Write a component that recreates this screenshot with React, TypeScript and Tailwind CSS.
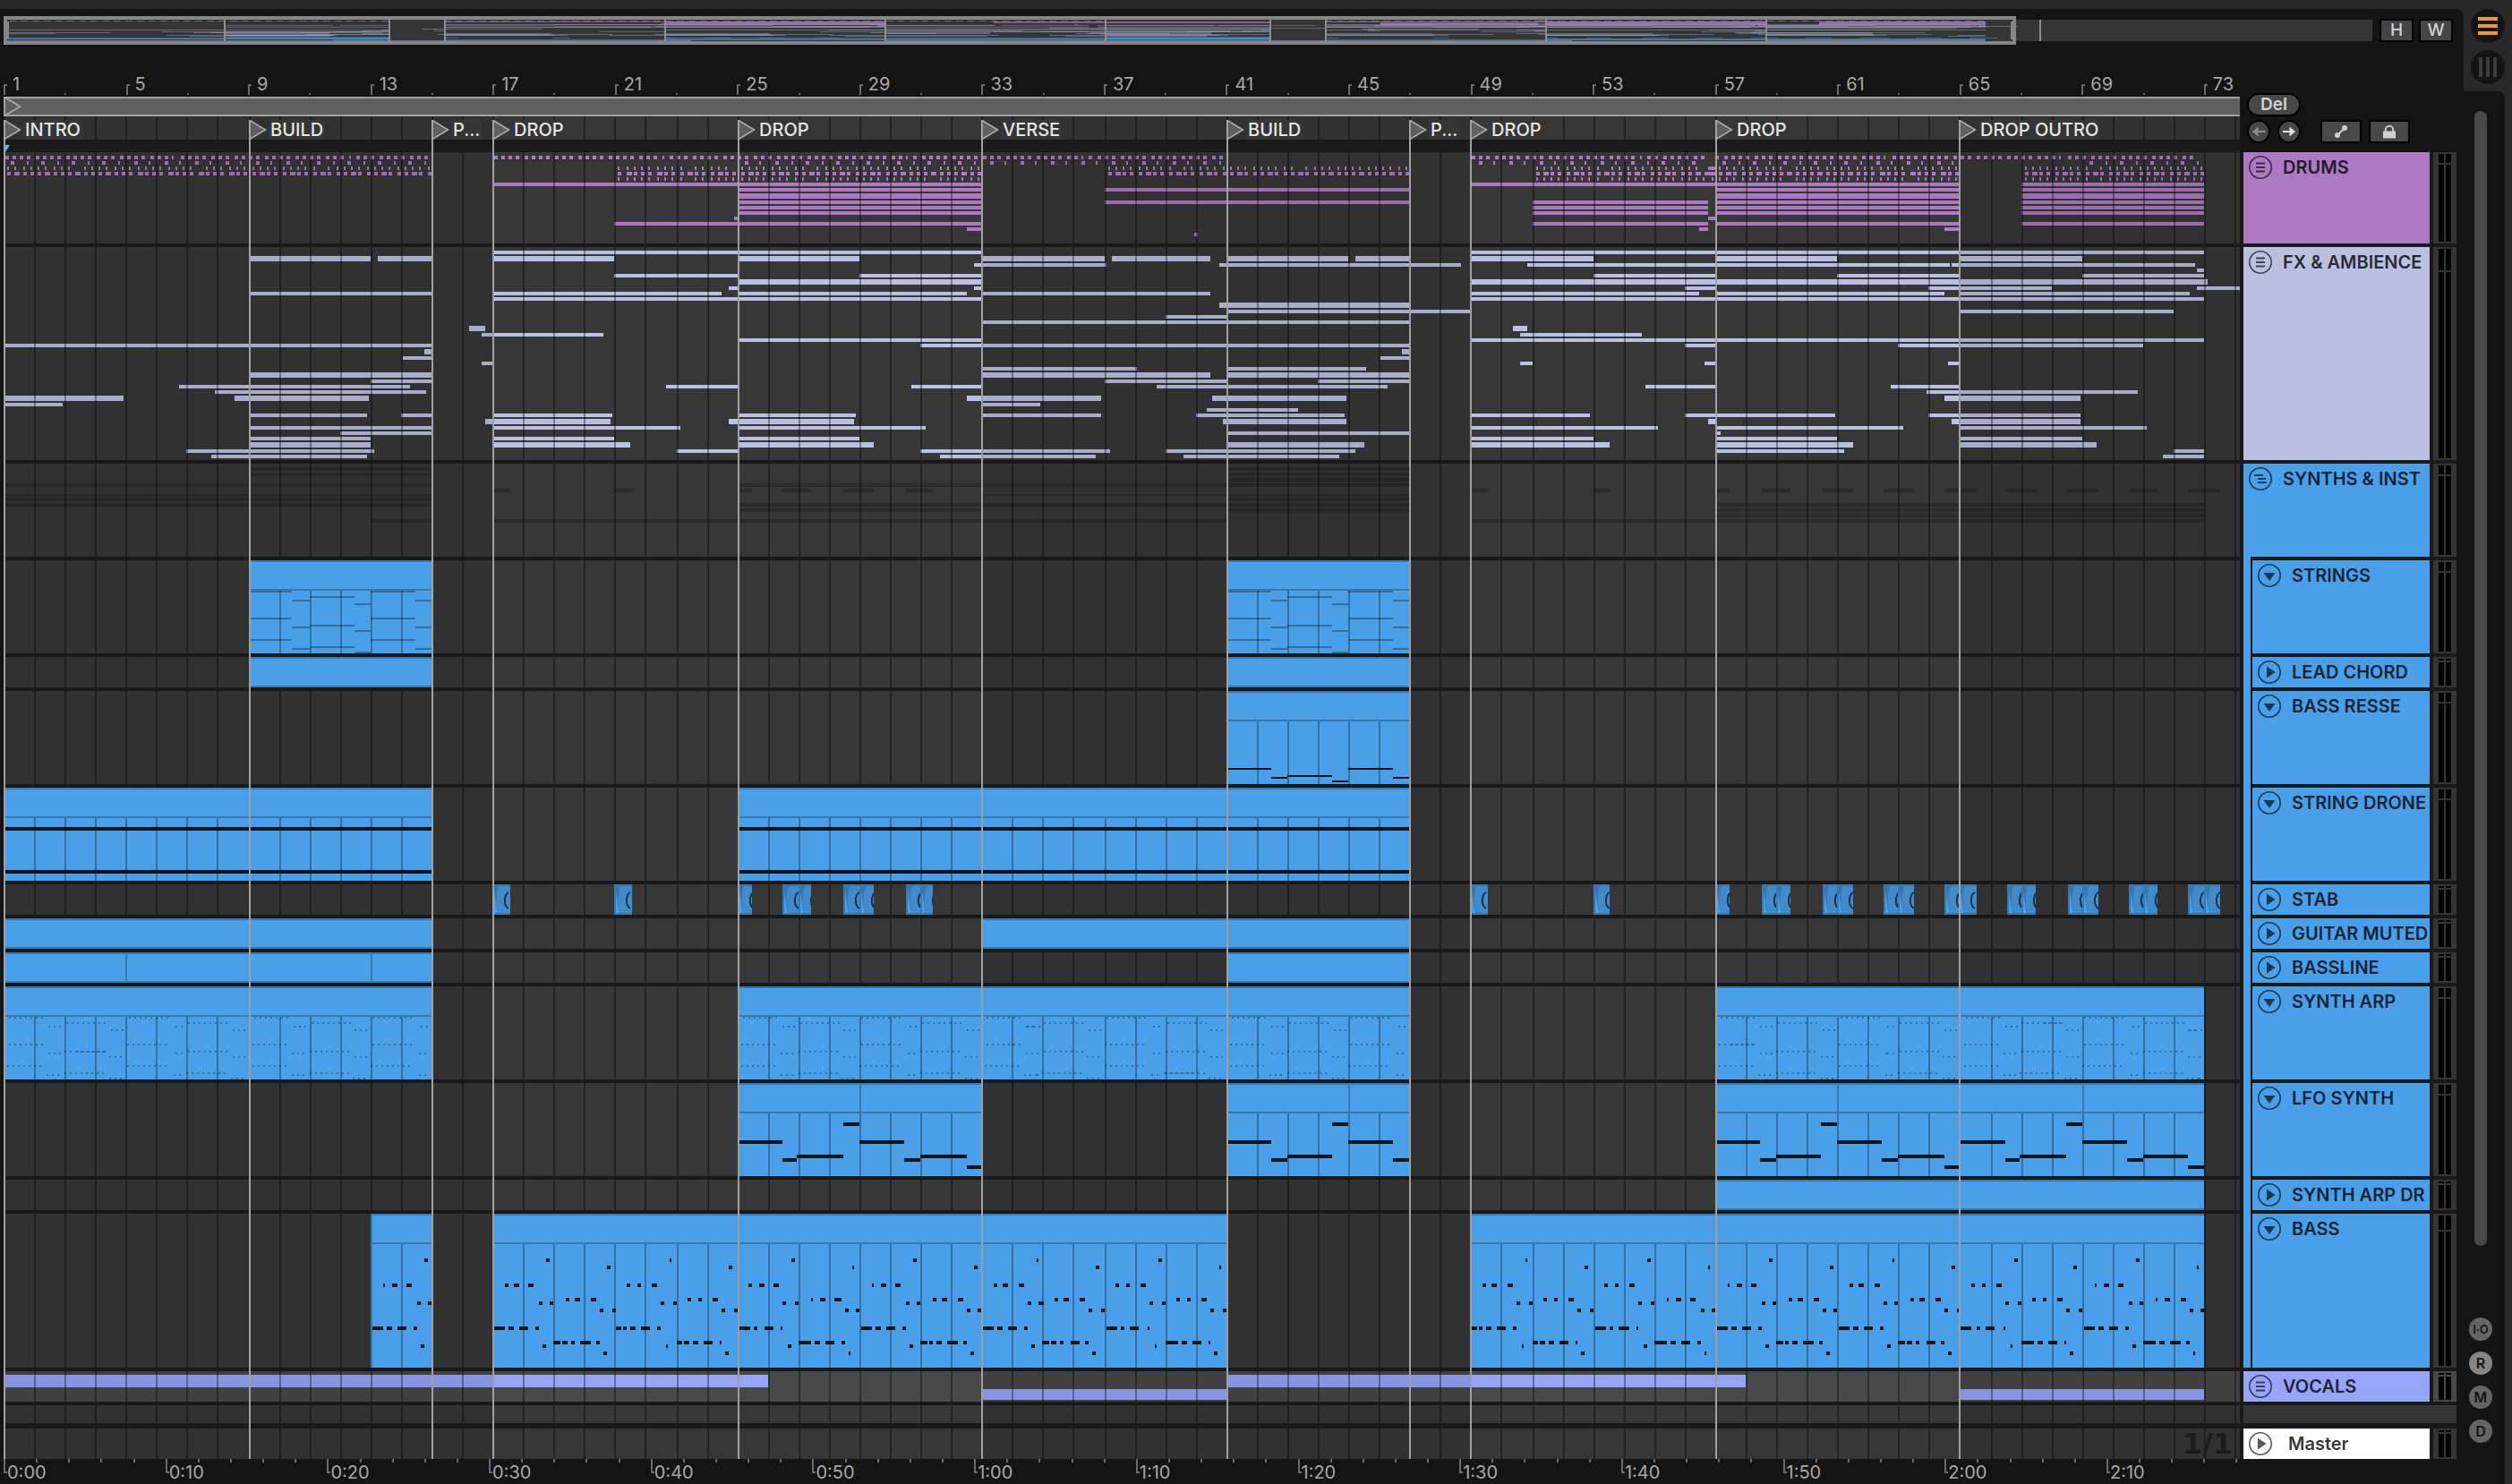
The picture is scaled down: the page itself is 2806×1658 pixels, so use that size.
import React from "react";

type Row = [y: number, h: number, spans: number[]];

interface Track {
  name: string;
  h: number;
  spans: number[];
  mini: [y: number, h: number];
  open?: boolean;
  dividers?: number[];
  notes?: Note[];
  notePeriod?: number;
  noteClass?: string;
}

type Note = [y: number, h: number, start: number, length: number];

const BAR = 34.14;
const WIDTH = 2498;
const BARS = WIDTH / BAR;

// Everything on the timeline snaps to a 2px raster.
// Bar lines are 2px wide, so off-grid events are measured from their centre.
const snap = (v: number) => 2 * Math.round(v / 2);
const barX = (bar: number) =>
  snap((bar - 1) * BAR + (Number.isInteger(bar) ? 0 : 1));
const pct = (bars: number) => `${(bars / BARS) * 100}%`;

const HEIGHTS: Record<number, string> = {
  20: "h-5",
  26: "h-[26px]",
  34: "h-[34px]",
  102: "h-[102px]",
  104: "h-[104px]",
  172: "h-[172px]",
  238: "h-[238px]",
};

const LOCATORS = [
  { bar: 1, label: "INTRO" },
  { bar: 9, label: "BUILD" },
  { bar: 15, label: "P..." },
  { bar: 17, label: "DROP" },
  { bar: 25, label: "DROP" },
  { bar: 33, label: "VERSE" },
  { bar: 41, label: "BUILD" },
  { bar: 47, label: "P..." },
  { bar: 49, label: "DROP" },
  { bar: 57, label: "DROP" },
  { bar: 65, label: "DROP OUTRO" },
];

const DRUM_ROWS: Row[] = [
  [34, 4, [17, 33, 49, 65, 67, 73]],
  [40, 4, [25, 33, 37, 47, 57, 65, 67, 73]],
  [46, 6, [25, 33, 57, 65, 67, 73]],
  [54, 4, [25, 33, 37, 47, 51, 56.75, 57, 65, 67, 73]],
  [60, 4, [25, 33, 51, 56.75, 57, 65, 67, 73]],
  [66, 4, [25, 33, 51, 56.75, 57, 65, 67, 73]],
  [72, 4, [24.87, 25, 56.75, 57]],
  [78, 4, [21, 33, 51, 56.75, 57, 65, 67, 73]],
  [84, 4, [32.5, 33, 56.45, 56.75, 64.5, 65]],
  [90, 4, [39.93, 40.05]],
  [16, 4, [56.75, 57]],
  [22, 4, [56.65, 57]],
];

const HIT_ROWS: {
  y: number;
  kind: "kick" | "snare" | "hat" | "perc";
  spans: number[];
}[] = [
  { y: 4, kind: "kick", spans: [1, 15, 17, 24.9, 25, 40.9, 49, 56.6, 57, 72.6] },
  { y: 10, kind: "snare", spans: [1, 15, 25, 40.9, 49, 56.4, 57, 65, 69, 73] },
  { y: 16, kind: "hat", spans: [1, 15, 21, 24.7, 25, 33, 37, 47, 51, 56.5, 57, 65, 67, 73] },
  { y: 22, kind: "perc", spans: [1, 15, 21, 33, 37, 47, 51, 56.5, 57, 65, 67, 73] },
  { y: 28, kind: "hat", spans: [21, 33, 51, 57, 57, 65, 67, 73] },
];

const FX_ROWS: Row[] = [
  [4, 4, [17, 33, 49, 73]],
  [10, 6, [9, 12.97, 13.2, 15, 17, 20.97, 25, 28.97, 33, 36.97, 37.23, 40.45, 41, 44.96, 45.2, 47, 49, 53, 57, 61, 65, 69]],
  [18, 4, [32.73, 37.05, 40.73, 48.68, 50.85, 64.65, 64.73, 72.7]],
  [24, 4, [72.75, 73]],
  [30, 4, [21, 25, 29, 33, 53, 57, 61, 65, 69, 73]],
  [36, 6, [25, 33, 49, 73.1]],
  [44, 4, [24.7, 25, 32.73, 33, 56, 57, 64, 68, 72.75, 74.2]],
  [50, 4, [9, 15, 17, 24.47, 25, 32.5, 33, 40.45, 49, 56.45, 57, 64.5, 65, 72.5]],
  [56, 4, [17, 33, 49, 73]],
  [62, 6, [40.73, 47]],
  [70, 4, [41, 49, 65, 72]],
  [76, 4, [39, 41]],
  [82, 4, [33, 47]],
  [88, 6, [16.2, 16.72, 50.38, 50.85]],
  [96, 4, [16.6, 20.6, 50.6, 54.6]],
  [102, 4, [25, 33, 49, 73]],
  [108, 4, [1, 15, 31, 47, 56, 57, 63, 71]],
  [114, 6, [14.74, 15, 46.73, 47]],
  [122, 4, [14.03, 15, 46.03, 47]],
  [128, 4, [16.6, 17, 50.6, 51, 56.65, 57, 64.6, 65]],
  [134, 4, [33, 38.05, 41, 45.55]],
  [140, 6, [9, 15, 33, 40.45, 41, 47]],
  [148, 4, [13, 15, 37, 41, 44, 47]],
  [154, 4, [6.7, 14.27, 22.65, 25, 30.67, 33, 38.7, 46.26, 54.7, 57, 62.7, 65]],
  [160, 4, [7.9, 14.8, 63.9, 70.8]],
  [166, 6, [1, 4.9, 8.53, 12.92, 32.5, 36.87, 40.5, 44.9, 64.5, 68.95]],
  [174, 4, [1, 2.9, 33, 34.9]],
  [180, 4, [40.35, 43.33]],
  [186, 4, [9, 12.86, 14, 15, 17, 20.88, 25, 28.86, 33, 36.87, 40, 44.85, 49, 52.9, 56, 60.9, 64, 68.9]],
  [192, 6, [16.73, 20.83, 24.7, 28.8, 40.87, 44.9, 56.75, 57, 64.73, 68.95]],
  [200, 4, [9, 15, 17, 23.1, 25, 31.15, 49, 55.1, 57, 63.15, 65, 71.1]],
  [206, 4, [12, 15, 41, 47, 57, 57.17]],
  [212, 4, [9, 13, 17, 21, 25, 29, 49, 53, 57, 61, 65, 69]],
  [218, 6, [9, 13, 17, 21.47, 25, 29.45, 41, 45.5, 49, 53.5, 57, 61.5, 65, 69.45]],
  [226, 4, [6.95, 13.1, 23, 25, 31, 37.18, 39, 45.2, 57, 61.2, 72, 73]],
  [232, 4, [7.77, 12.86, 31.6, 36.7, 39.6, 44.7, 71.65, 73]],
];

const VOCAL_ROWS: Row[] = [
  [4, 14, [1, 26, 41, 58]],
  [20, 12, [33, 41, 65, 73]],
];

const chordNotes = (levels: number[][], h: number): Note[] => {
  const parts = [
    [0, 1.43],
    [1.43, 0.55],
    [1.98, 1.48],
    [3.46, 0.5],
  ];
  return parts.flatMap(([start, length], i) =>
    levels[i].map((y): Note => [y, h, start, length])
  );
};

const arpNotes = (): Note[] => {
  const parts: [number, number, number[]][] = [
    [0.15, 7, [34, 64, 88]],
    [1.45, 3, [44, 74, 98]],
    [2.02, 8, [40, 72, 96]],
    [3.47, 3, [48, 78, 102]],
    [4.05, 8, [34, 64, 88]],
    [5.6, 2, [44, 74, 98]],
    [6.02, 8, [40, 72, 96]],
    [7.47, 3, [48, 78, 102]],
  ];
  const notes: Note[] = [];
  parts.forEach(([start, count, levels]) => {
    levels.forEach((y, l) => {
      for (let i = 0; i < count; i++) {
        notes.push([y, 2, start + i * 0.176 - l * 0.03, 0.06]);
      }
    });
  });
  return notes;
};

const BASS_NOTES: Note[] = [
  [50, 4, 1.75, 0.1],
  [58, 4, 3.72, 0.1],
  [78, 4, 0.37, 0.1],
  [78, 4, 0.68, 0.16],
  [78, 4, 1.16, 0.18],
  [94, 4, 2.37, 0.1],
  [94, 4, 2.68, 0.16],
  [94, 4, 3.18, 0.18],
  [98, 4, 1.48, 0.12],
  [98, 4, 1.86, 0.12],
  [106, 4, 3.48, 0.12],
  [106, 4, 3.86, 0.12],
  [126, 4, 0.03, 0.18],
  [126, 4, 0.22, 0.16],
  [126, 4, 0.5, 0.16],
  [126, 4, 0.84, 0.3],
  [126, 4, 1.38, 0.1],
  [142, 4, 2, 0.2],
  [142, 4, 2.24, 0.16],
  [142, 4, 2.52, 0.16],
  [142, 4, 2.86, 0.32],
  [142, 4, 3.38, 0.1],
  [146, 4, 1.62, 0.1],
  [154, 4, 3.6, 0.1],
];

const LFO_NOTES: Note[] = [
  [64, 4, 0, 1.45],
  [84, 4, 1.45, 0.5],
  [80, 4, 1.95, 1.5],
  [44, 4, 3.45, 0.52],
  [64, 4, 4, 1.45],
  [84, 4, 5.45, 0.5],
  [80, 4, 5.95, 1.52],
  [92, 4, 7.47, 0.53],
];

const STAB_SPANS = [
  17, 17.55, 21, 21.55, 25, 25.43, 26.43, 26.98, 26.98, 27.4, 28.43, 29, 29, 29.43,
  30.47, 30.98, 30.98, 31.4, 49, 49.55, 53, 53.53, 57, 57.45, 58.5, 59, 59, 59.45,
  60.5, 61, 61, 61.5, 62.5, 63, 63, 63.45, 64.5, 65, 65, 65.5, 66.5, 67, 67, 67.45,
  68.5, 69, 69, 69.5, 70.5, 71, 71, 71.43, 72.45, 73, 73, 73.5,
];

const SYNTH_TRACKS: Track[] = [
  {
    name: "STRINGS",
    h: 104,
    spans: [9, 15, 41, 47],
    mini: [4, 4],
    open: true,
    notes: chordNotes([[34, 64, 88], [44, 74, 98], [40, 72, 96], [48, 78, 102]], 2),
    notePeriod: 4,
    noteClass: "fill-black/30",
  },
  { name: "LEAD CHORD", h: 34, spans: [9, 15, 41, 47], mini: [10, 4] },
  {
    name: "BASS RESSE",
    h: 104,
    spans: [41, 47],
    mini: [16, 4],
    open: true,
    notes: chordNotes([[86], [96], [94], [100]], 2),
    notePeriod: 4,
    noteClass: "fill-[#06141c]",
  },
  {
    name: "STRING DRONE",
    h: 104,
    spans: [1, 15, 25, 47],
    mini: [22, 4],
    open: true,
    notes: [
      [44, 4, 0, 2],
      [92, 4, 0, 2],
    ],
    notePeriod: 2,
    noteClass: "fill-[#06141c]",
  },
  { name: "STAB", h: 34, spans: STAB_SPANS, mini: [28, 4] },
  { name: "GUITAR MUTED", h: 34, spans: [1, 15, 33, 47], mini: [34, 2] },
  { name: "BASSLINE", h: 34, spans: [1, 15, 41, 47], mini: [38, 4], dividers: [5, 13] },
  {
    name: "SYNTH ARP",
    h: 104,
    spans: [1, 15, 25, 47, 57, 73],
    mini: [44, 4],
    open: true,
    notes: arpNotes(),
    notePeriod: 8,
    noteClass: "fill-black/30",
  },
  {
    name: "LFO SYNTH",
    h: 104,
    spans: [25, 33, 41, 47, 57, 73],
    mini: [50, 4],
    open: true,
    dividers: [29, 45, 61, 69],
    notes: LFO_NOTES,
    notePeriod: 8,
    noteClass: "fill-[#06141c]",
  },
  { name: "SYNTH ARP DR", h: 34, spans: [57, 73], mini: [56, 4] },
  {
    name: "BASS",
    h: 172,
    spans: [13, 15, 17, 41, 49, 73],
    mini: [62, 4],
    open: true,
    notes: BASS_NOTES,
    notePeriod: 4,
    noteClass: "fill-[#06141c]",
  },
];

const SYNTH_MINI: Row[] = SYNTH_TRACKS.map((t) => [t.mini[0], t.mini[1], t.spans]);

const pairs = (spans: number[]) => {
  const out: [number, number][] = [];
  for (let i = 0; i < spans.length; i += 2) out.push([spans[i], spans[i + 1]]);
  return out;
};

const Spans: React.FC<{ rows: Row[]; className: string }> = ({ rows, className }) => (
  <g className={className}>
    {rows.map(([y, h, spans]) =>
      pairs(spans).map(([a, b], i) => (
        <rect key={`${y}-${i}`} x={barX(a)} y={y} width={barX(b) - barX(a)} height={h} />
      ))
    )}
  </g>
);

// Alternating 16-bar shading
const Zones: React.FC<{ h: number }> = ({ h }) => (
  <g className="fill-black/10">
    {[[1, 17], [33, 49], [65, 75]].map(([a, b]) => (
      <rect key={a} x={barX(a)} y={0} width={barX(b) - barX(a)} height={h} />
    ))}
  </g>
);

const Grid: React.FC<{ h: number }> = ({ h }) => (
  <g className="fill-black/35">
    {Array.from({ length: 74 }, (_, i) => (
      <rect key={i} x={barX(i + 1)} y={0} width={2} height={h} />
    ))}
  </g>
);

interface LaneProps {
  h: number;
  tone?: string;
  over?: React.ReactNode;
  children?: React.ReactNode;
}

const Lane: React.FC<LaneProps> = ({ h, tone = "bg-[#373737]", over, children }) => (
  <div className={`w-full ${tone} ${HEIGHTS[h]}`}>
    <svg
      className="block w-full h-full"
      viewBox={`0 0 ${WIDTH} ${h}`}
      preserveAspectRatio="none"
      shapeRendering="crispEdges"
      aria-hidden="true"
    >
      {children}
      <Zones h={h} />
      <Grid h={h} />
      {over}
    </svg>
  </div>
);

const DrumHits: React.FC = () => {
  const rects: React.ReactNode[] = [];
  HIT_ROWS.forEach(({ y, kind, spans }) => {
    pairs(spans).forEach(([a, b]) => {
      for (let q = 0; q < (b - a) * 4; q++) {
        const pos = a + q / 4;
        let offset = 0;
        let width = 4;
        if (kind === "kick") {
          offset = 1;
          if (q % 23 === 22) width = 2;
        }
        if (kind === "snare") {
          if (q % 2 === 0) continue;
          width = q % 4 === 1 ? 4 : 2;
        }
        if (kind === "hat") {
          offset = 4;
          width = 2;
          if (q % 16 === 9) continue;
        }
        if (kind === "perc") {
          offset = 4;
          width = q % 4 === 1 ? 6 : 4;
        }
        const x = snap((pos - 1) * BAR + offset);
        if (x + width > barX(b) + 2) continue;
        rects.push(<rect key={`${y}-${x}`} x={x} y={y} width={width} height={4} />);
      }
    });
  });
  return <g className="fill-[#ad79c2]">{rects}</g>;
};

const StabClip: React.FC<{ a: number; b: number }> = ({ a, b }) => {
  const x = barX(a);
  const w = barX(b) - x;
  return (
    <svg x={x} y={0} width={w} height={34} viewBox={`0 0 ${w} 34`} shapeRendering="auto">
      <rect width={w} height={34} className="fill-[#3579b0]" />
      <rect x={2} y={2} width={w} height={30} className="fill-[#428bc8]" />
      <path d="M2 2H7C4 12 4 22 6 32H2Z" className="fill-[#3877ab]" />
      <path d="M2 8L5.500 32H2Z" className="fill-[#4aa0e8]" />
      <path d="M18 9C12.500 12 12.500 24 18 27" className="fill-none stroke-[#0d2a40]" strokeWidth={1.8} />
    </svg>
  );
};

const Clip: React.FC<{ track: Track; a: number; b: number }> = ({ track, a, b }) => {
  const { h, notes, notePeriod = 4, noteClass, dividers = [] } = track;
  const x = barX(a);
  const w = barX(b) - x;
  const placed: React.ReactNode[] = [];
  if (notes) {
    for (let base = a; base < b; base += notePeriod) {
      notes.forEach(([y, nh, start, length], i) => {
        const from = base + start;
        if (from >= b - 0.03) return;
        const left = barX(from);
        const right = Math.max(left + 2, barX(Math.min(from + length, b)));
        placed.push(
          <rect key={`${base}-${i}`} x={left} y={y} width={right - left} height={nh} />
        );
      });
    }
  }
  return (
    <g>
      <rect x={x} y={0} width={w} height={h} className="fill-[#4aa0e8]" />
      <rect x={x} y={0} width={w} height={2} className="fill-[#3579b0]" />
      <rect x={x} y={32} width={w} height={2} className="fill-[#3579b0]" />
      <rect x={x} y={0} width={2} height={h} className="fill-[#3579b0]" />
      {dividers
        .filter((d) => d > a && d < b)
        .map((d) => (
          <rect key={d} x={barX(d)} y={2} width={2} height={30} className="fill-[#3579b0]" />
        ))}
      {notes &&
        Array.from({ length: Math.ceil(b - a) - 1 }, (_, i) => (
          <rect
            key={i}
            x={barX(a + i + 1)}
            y={34}
            width={2}
            height={h - 34}
            className="fill-black/30"
          />
        ))}
      <g className={noteClass}>{placed}</g>
    </g>
  );
};

const TrackLane: React.FC<{ track: Track }> = ({ track }) => (
  <Lane
    h={track.h}
    over={pairs(track.spans).map(([a, b]) =>
      track.name === "STAB" ? (
        <StabClip key={a} a={a} b={b} />
      ) : (
        <Clip key={a} track={track} a={a} b={b} />
      )
    )}
  />
);

type IconKind = "group" | "nested" | "open" | "closed";

const FoldIcon: React.FC<{ kind: IconKind }> = ({ kind }) => (
  <svg className="w-[26px] h-[26px]" viewBox="0 0 26 26" fill="none" stroke="currentColor" strokeWidth={1.6}>
    <circle cx="13" cy="13" r="12.200" />
    {kind === "group" && <path d="M8 8.500h10M8 13h10M8 17.500h10" strokeWidth={2} />}
    {kind === "nested" && <path d="M6 9h10M10 13h9M10 17h10" strokeWidth={2} />}
    {kind === "open" && <path d="M6.500 10h13L13 19Z" fill="currentColor" stroke="none" />}
    {kind === "closed" && <path d="M10 6.500L19.500 13L10 19.500Z" fill="currentColor" stroke="none" />}
  </svg>
);

interface HeaderProps {
  name: string;
  h: number;
  kind: IconKind;
  tone: string;
  wide?: boolean;
}

const TrackHeader: React.FC<HeaderProps> = ({ name, h, kind, tone, wide }) => (
  <div className={`${tone} ${HEIGHTS[h]} overflow-hidden`}>
    <div className={`h-[34px] flex items-center pl-[6px] ${wide ? "gap-[18px]" : "gap-3"}`}>
      <button aria-label={`Fold ${name}`} className="text-black/65 shrink-0">
        <FoldIcon kind={kind} />
      </button>
      <span className="text-[20px] leading-6 font-semibold whitespace-nowrap text-black/80">
        {name}
      </span>
    </div>
  </div>
);

const Meter: React.FC<{ h: number; tone?: string }> = ({ h, tone = "bg-[#353535]" }) => {
  let peak = "h-[2px]";
  if (h > 50) peak = "h-[10px]";
  if (h > 150) peak = "h-4";
  if (h > 200) peak = "h-6";
  return (
    <div className={`${tone} ${HEIGHTS[h]} px-[6px] py-[2px] flex gap-[2px]`}>
      {[0, 1].map((i) => (
        <div key={i} className="flex-1 flex flex-col gap-[2px]">
          <div className={`bg-black ${peak}`} />
          <div className="bg-black flex-1" />
        </div>
      ))}
    </div>
  );
};

const OVER_BAR = 30.74;
const overX = (bar: number) => snap((bar - 1) * OVER_BAR);

const MiniSpans: React.FC<{ rows: Row[]; top: number; scale: number; className: string }> = ({
  rows,
  top,
  scale,
  className,
}) => (
  <g className={className}>
    {rows.map(([y, , spans]) =>
      pairs(spans).map(([a, b], i) => (
        <rect
          key={`${y}-${i}`}
          x={overX(a)}
          y={Math.round(top + y * scale)}
          width={Math.max(2, overX(b) - overX(a))}
          height={1}
        />
      ))
    )}
  </g>
);

const Overview: React.FC = () => (
  <svg
    className="block flex-1 min-w-0 h-8"
    viewBox="0 0 2646 32"
    preserveAspectRatio="none"
    shapeRendering="crispEdges"
    role="img"
    aria-label="Arrangement overview"
  >
    <rect x={0} y={4} width={2646} height={24} className="fill-[#353535]" />
    <MiniSpans rows={DRUM_ROWS} top={4} scale={0.06} className="fill-[#ad79c2]/60" />
    <path
      d={`M6 5H${overX(15)}M${overX(17)} 5H${overX(41)}M${overX(49)} 5H${overX(73)}`}
      className="stroke-[#ad79c2]/50"
      strokeWidth={1}
      strokeDasharray="8 5"
    />
    <MiniSpans rows={FX_ROWS} top={9} scale={0.055} className="fill-[#bac0e2]/35" />
    <MiniSpans rows={SYNTH_MINI} top={23} scale={0.05} className="fill-[#3f97de]/50" />
    <MiniSpans rows={VOCAL_ROWS} top={27} scale={0} className="fill-[#96a5fc]/50" />
    <g className="fill-[#8e8e8e]">
      {LOCATORS.slice(1).map(({ bar }) => (
        <rect key={bar} x={overX(bar)} y={4} width={2} height={24} />
      ))}
      <rect x={overX(75)} y={4} width={2} height={24} />
    </g>
    <rect x={2} y={2} width={2244} height={28} className="fill-none stroke-[#868686]" strokeWidth={4} />
    <rect x={0} y={6} width={6} height={20} className="fill-[#868686]" />
    <rect x={2242} y={6} width={4} height={20} className="fill-[#868686]" />
  </svg>
);

const BarRuler: React.FC = () => (
  <div className="flex h-[58px] pt-8 overflow-hidden">
    {Array.from({ length: 19 }, (_, i) => (
      <div key={i} className="relative shrink-0 flex" style={{ width: pct(4) }}>
        <span className="mt-3 w-1 h-3 border-l-2 border-t-2 border-[#6b6b6b]" />
        <span className="ml-[6px] text-[20px] leading-6 text-[#a8a8a8]">{1 + i * 4}</span>
        <span className="absolute left-1/2 bottom-[2px] w-[2px] h-[2px] bg-[#6b6b6b]" />
      </div>
    ))}
  </div>
);

const formatTime = (s: number) => `${Math.floor(s / 60)}:${String(s % 60).padStart(2, "0")}`;

const TimeRuler: React.FC = () => (
  <div className="flex h-7 overflow-hidden">
    {Array.from({ length: 14 }, (_, i) => (
      <div key={i} className="relative shrink-0" style={{ width: `${(180.7 / WIDTH) * 100}%` }}>
        <div className="grid grid-cols-5 h-1">
          {[0, 1, 2, 3, 4].map((t) => (
            <span key={t} className="border-l-2 border-[#6b6b6b]" />
          ))}
        </div>
        <div className="flex">
          <span className="w-1 h-3 border-l-2 border-b-2 border-[#6b6b6b]" />
          <span className="text-[20px] leading-[22px] text-[#a8a8a8]">{formatTime(i * 10)}</span>
        </div>
      </div>
    ))}
  </div>
);

const FlagIcon: React.FC = () => (
  <svg className="block w-5 h-[22px] shrink-0" viewBox="0 0 20 22">
    <path d="M1 .5L18.500 11L1 21.500Z" className="fill-[#5f5f5f] stroke-[#ababab]" strokeWidth={1.6} />
  </svg>
);

const Locators: React.FC = () => (
  <div className="absolute inset-0 top-1 pointer-events-none">
    {LOCATORS.map(({ bar, label }) => (
      <div key={bar} className="absolute top-0 bottom-0 border-l-2 border-[#a0a0a0]" style={{ left: `${(barX(bar) / WIDTH) * 100}%` }}>
        <button className="flex items-center -ml-[2px] pointer-events-auto">
          <FlagIcon />
          <span className="ml-[2px] px-[2px] bg-[#353535] text-[20px] leading-[22px] font-medium whitespace-nowrap text-[#e6e6e6]">
            {label}
          </span>
        </button>
      </div>
    ))}
  </div>
);

const TransportControls: React.FC = () => (
  <div className="w-[250px] shrink-0 bg-[#141414] pl-2 pt-[54px]">
    <button className="w-[60px] h-[26px] flex items-center justify-center rounded-full border-2 border-black bg-[#484848] text-[19px] font-semibold text-[#d2d2d2]">
      Del
    </button>
    <div className="flex mt-1">
      <button aria-label="Previous locator" className="w-[26px] h-[26px] rounded-full border-2 border-black bg-[#484848] text-[#8c8c8c]">
        <svg className="w-full h-full" viewBox="0 0 22 22" fill="currentColor">
          <path d="M4 11L10.500 5.500V10H18V12H10.500V16.500Z" />
        </svg>
      </button>
      <button aria-label="Next locator" className="ml-2 w-[26px] h-[26px] rounded-full border-2 border-black bg-[#484848] text-[#e0e0e0]">
        <svg className="w-full h-full" viewBox="0 0 22 22" fill="currentColor">
          <path d="M18 11L11.500 5.500V10H4V12H11.500V16.500Z" />
        </svg>
      </button>
      <button aria-label="Automation mode" className="ml-[22px] w-[46px] h-[26px] flex items-center justify-center border-2 border-black bg-[#484848] text-[#cfcfcf]">
        <svg className="w-4 h-4" viewBox="0 0 16 16" fill="currentColor">
          <circle cx="4" cy="12" r="3" />
          <circle cx="12" cy="4" r="3" />
          <path d="M4 12L12 4" stroke="currentColor" strokeWidth="1.800" />
        </svg>
      </button>
      <button aria-label="Lock envelopes" className="ml-2 w-[46px] h-[26px] flex items-center justify-center border-2 border-black bg-[#484848] text-[#cfcfcf]">
        <svg className="w-4 h-4" viewBox="0 0 16 16" fill="none">
          <rect x="1" y="7.500" width="14" height="8" fill="currentColor" />
          <path d="M3.800 8V6a4.200 4.200 0 0 1 8.400 0V8" stroke="currentColor" strokeWidth="2" />
        </svg>
      </button>
    </div>
  </div>
);

const SideRail: React.FC = () => (
  <aside className="w-[54px] shrink-0 flex flex-col">
    <div className="h-[92px] flex flex-col gap-2 items-center">
      <button aria-label="Arrangement view" className="w-[38px] h-[38px] rounded-full bg-[#141414] flex flex-col gap-1 items-center justify-center">
        {[0, 1, 2].map((i) => (
          <span key={i} className="w-[22px] h-1 bg-[#e8993c]" />
        ))}
      </button>
      <button aria-label="Session view" className="w-[38px] h-[38px] rounded-full bg-[#141414] flex gap-1 items-center justify-center">
        {[0, 1, 2].map((i) => (
          <span key={i} className="w-1 h-[22px] bg-[#3c3c3c]" />
        ))}
      </button>
    </div>
    <div className="flex-1 mr-2 bg-[#141414] rounded-tr-lg flex flex-col pl-[6px] pt-[22px] pb-[46px]">
      <div className="flex-1 w-[14px] ml-[6px] rounded-full bg-[#484848]" />
      <div className="mt-20 flex flex-col gap-3 text-[16px] leading-none font-semibold text-[#161616]">
        <button className="w-[26px] h-[26px] rounded-full bg-[#646464] text-[13px]">I·O</button>
        <button className="w-[26px] h-[26px] rounded-full bg-[#868686]">R</button>
        <button className="w-[26px] h-[26px] rounded-full bg-[#646464]">M</button>
        <button className="w-[26px] h-[26px] rounded-full bg-[#646464]">D</button>
      </div>
    </div>
  </aside>
);

const App: React.FC = () => {
  return (
    <div
      className="min-h-screen pt-[10px] flex bg-[#282828] select-none"
      style={{ fontFamily: 'Inter, "Liberation Sans", sans-serif' }}
    >
      <main className="flex-1 min-w-0 flex flex-col bg-[#141414] rounded-tr-lg">
        <div className="flex items-center pt-2 pl-1 pr-3 gap-2">
          <Overview />
          <div className="flex gap-[6px]">
            <button className="w-[38px] h-[26px] flex items-center justify-center border-2 border-black bg-[#454545] text-[19px] font-medium text-[#d2d2d2]">
              H
            </button>
            <button className="w-[38px] h-[26px] flex items-center justify-center border-2 border-black bg-[#454545] text-[19px] font-medium text-[#d2d2d2]">
              W
            </button>
          </div>
        </div>

        <div className="flex pl-1">
          <div className="flex-1 min-w-0">
            <BarRuler />
            <div className="h-[22px] bg-[#5f5f5f] border-y-2 border-[#a0a0a0] flex items-center">
              <FlagIcon />
            </div>
          </div>
          <div className="h-20 w-[250px] shrink-0 overflow-visible">
            <TransportControls />
          </div>
        </div>

        <div className="flex pl-1">
          <div className="relative flex-1 min-w-0 bg-[#191919]">
            <Lane h={26} />
            <div className="h-[14px] flex items-end">
              <svg className="w-2 h-2" viewBox="0 0 8 8">
                <path d="M0 0H7L2 8H0Z" className="fill-[#5ec3dc]" />
              </svg>
            </div>
            <div className="flex flex-col gap-1">
              <Lane h={102}>
                <Spans rows={DRUM_ROWS} className="fill-[#ad79c2]" />
                <DrumHits />
              </Lane>
              <Lane h={238}>
                <Spans rows={FX_ROWS} className="fill-[#bac0e2]" />
              </Lane>
              <Lane h={104}>
                <Spans rows={SYNTH_MINI} className="fill-[#2b2b2b]" />
              </Lane>
              {SYNTH_TRACKS.map((track) => (
                <TrackLane key={track.name} track={track} />
              ))}
              <Lane h={34} tone="bg-[#484848]">
                <Spans rows={VOCAL_ROWS} className="fill-[#96a5fc]" />
              </Lane>
              <Lane h={20} />
            </div>
            <div className="relative mt-[6px]">
              <Lane h={34} />
              <span className="absolute right-2 bottom-0 font-['DejaVu_Sans'] text-[32px] leading-[34px] font-bold text-[#1c1c1c]">
                1/1
              </span>
            </div>
            <Locators />
          </div>

          <div className="w-[242px] shrink-0 mt-10 pl-1 bg-[#191919] flex gap-1">
            <div className="flex-1 min-w-0 flex flex-col gap-1">
              <TrackHeader name="DRUMS" h={102} kind="group" tone="bg-[#ad79c2]" />
              <TrackHeader name="FX & AMBIENCE" h={238} kind="group" tone="bg-[#bac0e0]" />
              <div className="bg-[#4aa0e8]">
                <TrackHeader name="SYNTHS & INST" h={104} kind="nested" tone="bg-[#4aa0e8]" />
                <div className="ml-2 pl-[2px] pt-1 flex flex-col gap-1 bg-[#191919]">
                  {SYNTH_TRACKS.map(({ name, h, open }) => (
                    <TrackHeader
                      key={name}
                      name={name}
                      h={h}
                      kind={open ? "open" : "closed"}
                      tone="bg-[#4aa0e8]"
                    />
                  ))}
                </div>
              </div>
              <TrackHeader name="VOCALS" h={34} kind="group" tone="bg-[#96a5fa]" />
              <div className="h-5 -mr-[30px] bg-[#353535]" />
              <div className="mt-[2px]">
                <TrackHeader name="Master" h={34} kind="closed" tone="bg-white" wide />
              </div>
            </div>
            <div className="w-[26px] flex flex-col gap-1">
              <Meter h={102} />
              <Meter h={238} />
              <Meter h={104} />
              {SYNTH_TRACKS.map(({ name, h }) => (
                <Meter key={name} h={h} />
              ))}
              <Meter h={34} tone="bg-[#484848]" />
              <div className="h-5 bg-[#353535]" />
              <div className="mt-[2px]">
                <Meter h={34} />
              </div>
            </div>
          </div>
          <div className="w-2 shrink-0" />
        </div>

        <div className="flex pl-1">
          <div className="flex-1 min-w-0">
            <TimeRuler />
          </div>
          <div className="w-[250px] shrink-0" />
        </div>
      </main>
      <SideRail />
    </div>
  );
};

export default App;
